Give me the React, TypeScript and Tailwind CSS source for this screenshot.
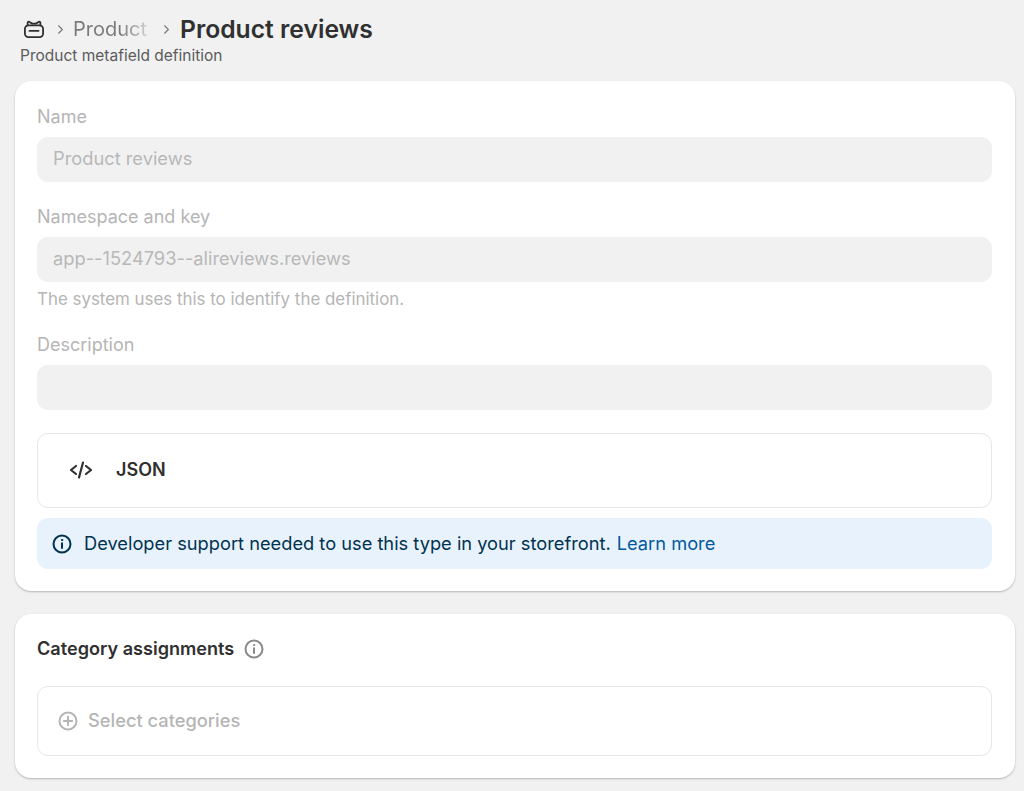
import { ChevronRight } from "lucide-react";

function Field({ label, value }: { label: string; value?: string }) {
  return (
    <div>
      <div className="text-[18px] leading-[20px] text-[#b5b5b5]">{label}</div>
      <div className="mt-[10px] h-[45px] rounded-[11px] bg-[#f1f1f1] px-[16px] text-[18.300px] leading-[43px] text-[#b8b8b8]">
        {value}
      </div>
    </div>
  );
}

function InfoIcon({ className }: { className: string }) {
  return (
    <svg viewBox="0 0 20 20" fill="none" stroke="currentColor" strokeWidth="2" strokeLinecap="round" className={className}>
      <circle cx="10" cy="10" r="8.500" />
      <path d="M10 9.200v4.800" />
      <circle cx="10" cy="6" r="0.700" fill="currentColor" strokeWidth="0.900" />
    </svg>
  );
}

export default function App() {
  return (
    <div className="h-[791px] w-[1024px] overflow-hidden bg-[#f1f1f1] font-['Inter',sans-serif]">
      <header className="h-[81px] pl-[20px] pt-[13px]">
        <div className="flex h-[32px] items-center">
          <svg viewBox="0 0 24 22" fill="none" stroke="#303030" strokeWidth="2" strokeLinejoin="round" strokeLinecap="round" className="ml-[3px] h-[20px] w-[22px]">
            <path d="M5 7V4.2c0-1 1.1-1.6 2-1l2.6 1.6a2 2 0 0 0 1.1.3h2.6a2 2 0 0 0 1.1-.3L17 3.200c.9-.6 2-.000 2 1V7" />
            <rect x="2" y="7" width="20" height="13" rx="4" />
            <path d="M7 13h10" />
          </svg>
          <ChevronRight className="ml-[8px] h-[15px] w-[15px] text-[#777]" strokeWidth={1.7} />
          <span className="ml-[5px] w-[78px] bg-gradient-to-r from-[#7a7a7a] from-60% to-[#dddddd] bg-clip-text text-[20px] leading-[32px] text-transparent">
            Product
          </span>
          <ChevronRight className="ml-[8px] h-[15px] w-[15px] text-[#777]" strokeWidth={1.7} />
          <h1 className="ml-[6px] text-[24.700px] leading-[32px] font-semibold text-[#303030]">Product reviews</h1>
        </div>
        <p className="mt-[1px] text-[15.500px] leading-[20px] text-[#5c5c5c]">Product metafield definition</p>
      </header>

      <main className="mx-[15px] flex w-[1000px] flex-col gap-[23px]">
        <section className="h-[510px] rounded-[16px] bg-white px-[22px] pt-[26px] shadow-[0_1px_2px_rgba(0,0,0,0.25)]">
          <div className="w-[955px]">
            <Field label="Name" value="Product reviews" />
            <div className="mt-[25px]">
              <Field label="Namespace and key" value="app--1524793--alireviews.reviews" />
            </div>
            <p className="mt-[7px] text-[16.900px] leading-[20px] text-[#b5b5b5]">The system uses this to identify the definition.</p>
            <div className="mt-[26px]">
              <Field label="Description" />
            </div>
            <div className="mt-[23px] flex h-[75px] items-center rounded-[11px] border border-[#e6e6e6] pb-[2px] pl-[31px]">
              <svg viewBox="0 0 24 20" fill="none" stroke="#303030" strokeWidth="2.200" strokeLinecap="round" strokeLinejoin="round" className="h-[20px] w-[24px]">
                <path d="M7 6l-5 4 5 4M17 6l5 4-5 4M14 2.500 10 17.500" />
              </svg>
              <span className="ml-[23px] text-[18px] font-semibold text-[#303030]">JSON</span>
            </div>
            <div className="mt-[10px] flex h-[51px] items-center rounded-[11px] bg-[#e8f2fc] pl-[15px] text-[18.250px] text-[#00324f]">
              <InfoIcon className="h-[20px] w-[20px] text-[#00324f]" />
              <span className="ml-[12px]">Developer support needed to use this type in your storefront.</span>
              <span className="ml-[6px] text-[#00589f]">Learn more</span>
            </div>
          </div>
        </section>

        <section className="h-[164px] rounded-[16px] bg-white px-[22px] pt-[23px] shadow-[0_1px_2px_rgba(0,0,0,0.25)]">
          <div className="flex h-[24px] items-center">
            <h2 className="text-[18.100px] font-semibold text-[#303030]">Category assignments</h2>
            <InfoIcon className="ml-[10px] h-[20px] w-[20px] text-[#8a8a8a]" />
          </div>
          <div className="mt-[25px] flex h-[70px] w-[955px] items-center rounded-[11px] border border-[#e6e6e6] pl-[20px]">
            <svg viewBox="0 0 20 20" fill="none" stroke="#b5b5b5" strokeWidth="2" strokeLinecap="round" className="h-[20px] w-[20px]">
              <circle cx="10" cy="10" r="8.500" />
              <path d="M10 5.800v8.400M5.800 10h8.400" />
            </svg>
            <span className="ml-[10px] text-[18.300px] font-medium text-[#b5b5b5]">Select categories</span>
          </div>
        </section>
      </main>
    </div>
  );
}
